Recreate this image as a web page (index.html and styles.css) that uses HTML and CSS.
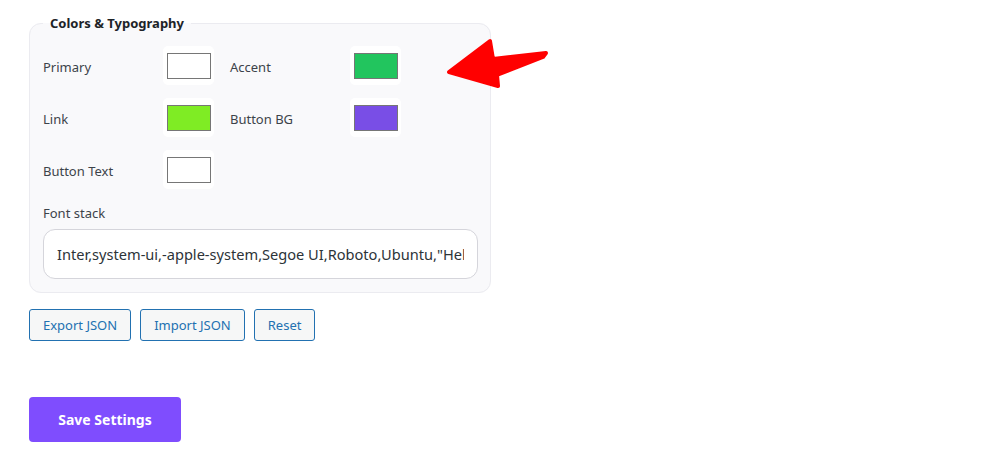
FILE: index.html
```html
<!DOCTYPE html>
<html>
<head>
<meta charset="utf-8">
<link rel="stylesheet" href="styles.css">
</head>
<body>
<div class="page">
  <fieldset class="panel">
    <legend class="panel-title">Colors &amp; Typography</legend>
    <div class="swatch-grid">
      <div class="field"><span class="field-label">Primary</span><span class="swatch-wrap"><span class="swatch" style="background:#ffffff"></span></span></div>
      <div class="field"><span class="field-label">Accent</span><span class="swatch-wrap"><span class="swatch" style="background:#22c55e"></span></span></div>
      <div class="field"><span class="field-label">Link</span><span class="swatch-wrap"><span class="swatch" style="background:#7fec24"></span></span></div>
      <div class="field"><span class="field-label">Button BG</span><span class="swatch-wrap"><span class="swatch" style="background:#794ee6"></span></span></div>
      <div class="field"><span class="field-label">Button Text</span><span class="swatch-wrap"><span class="swatch" style="background:#ffffff"></span></span></div>
    </div>
    <label class="stack-label">Font stack</label>
    <input class="stack-input" type="text" value='Inter,system-ui,-apple-system,Segoe UI,Roboto,Ubuntu,"Helvetica Neue",Arial,sans-serif'>
  </fieldset>
  <div class="actions">
    <button class="btn-secondary">Export JSON</button>
    <button class="btn-secondary">Import JSON</button>
    <button class="btn-secondary">Reset</button>
  </div>
  <button class="btn-save">Save Settings</button>
  <svg class="pointer" width="110" height="60" viewBox="440 32 110 60">
    <polygon points="449,72 490,41 493,59 546,53 543,57 497,75 498,86" fill="#ff0000" stroke="#ff0000" stroke-width="4" stroke-linejoin="round"/>
  </svg>
</div>
</body>
</html>
```
FILE: styles.css
```css
html, body {
  margin: 0;
  padding: 0;
  background: #ffffff;
}
body {
  font-family: "Noto Sans", "Open Sans", sans-serif;
  color: #3c434a;
  font-size: 13px;
}
.page {
  position: relative;
  padding: 14px 0 0 29px;
}
.panel {
  box-sizing: border-box;
  width: 462px;
  margin: 0;
  padding: 14px 12px 13px 13px;
  border: 1px solid #ebebf0;
  border-radius: 12px;
  background: #f9f9fb;
}
.panel-title {
  padding: 0 7px;
  font-weight: 700;
  font-size: 13px;
  color: #1d2327;
  line-height: 18px;
}
.swatch-grid {
  display: grid;
  grid-template-columns: 187px 187px;
  row-gap: 13px;
}
.field {
  display: flex;
  align-items: center;
  height: 39px;
}
.field-label {
  width: 120px;
  padding-top: 3px;
}
.swatch-wrap {
  display: flex;
  align-items: center;
  justify-content: center;
  width: 51px;
  height: 39px;
  background: #ffffff;
  border-radius: 5px;
}
.swatch {
  box-sizing: border-box;
  width: 44px;
  height: 26px;
  border: 1px solid #767676;
}
.stack-label {
  display: block;
  margin-top: 15px;
  line-height: 18px;
}
.stack-input {
  display: block;
  box-sizing: border-box;
  width: 435px;
  height: 50px;
  margin-top: 7px;
  padding: 0 13px;
  border: 1px solid #d5d5db;
  border-radius: 12px;
  background: #ffffff;
  font-family: "Noto Sans", "Open Sans", sans-serif;
  font-size: 14.6px;
  color: #2c3338;
  outline: none;
}
.actions {
  display: flex;
  gap: 9px;
  margin-top: 16px;
}
.btn-secondary {
  box-sizing: border-box;
  height: 32px;
  padding: 0 13px;
  border: 1px solid #2271b1;
  border-radius: 3px;
  background: #f6f7f7;
  color: #2271b1;
  font-family: "Noto Sans", "Open Sans", sans-serif;
  font-size: 13px;
}
.btn-save {
  display: block;
  box-sizing: border-box;
  width: 152px;
  height: 45px;
  margin-top: 56px;
  border: none;
  border-radius: 4px;
  background: #7f4dfe;
  color: #ffffff;
  font-family: "Noto Sans", "Open Sans", sans-serif;
  font-size: 14px;
  font-weight: 700;
}
.pointer {
  position: absolute;
  left: 440px;
  top: 32px;
}
```
